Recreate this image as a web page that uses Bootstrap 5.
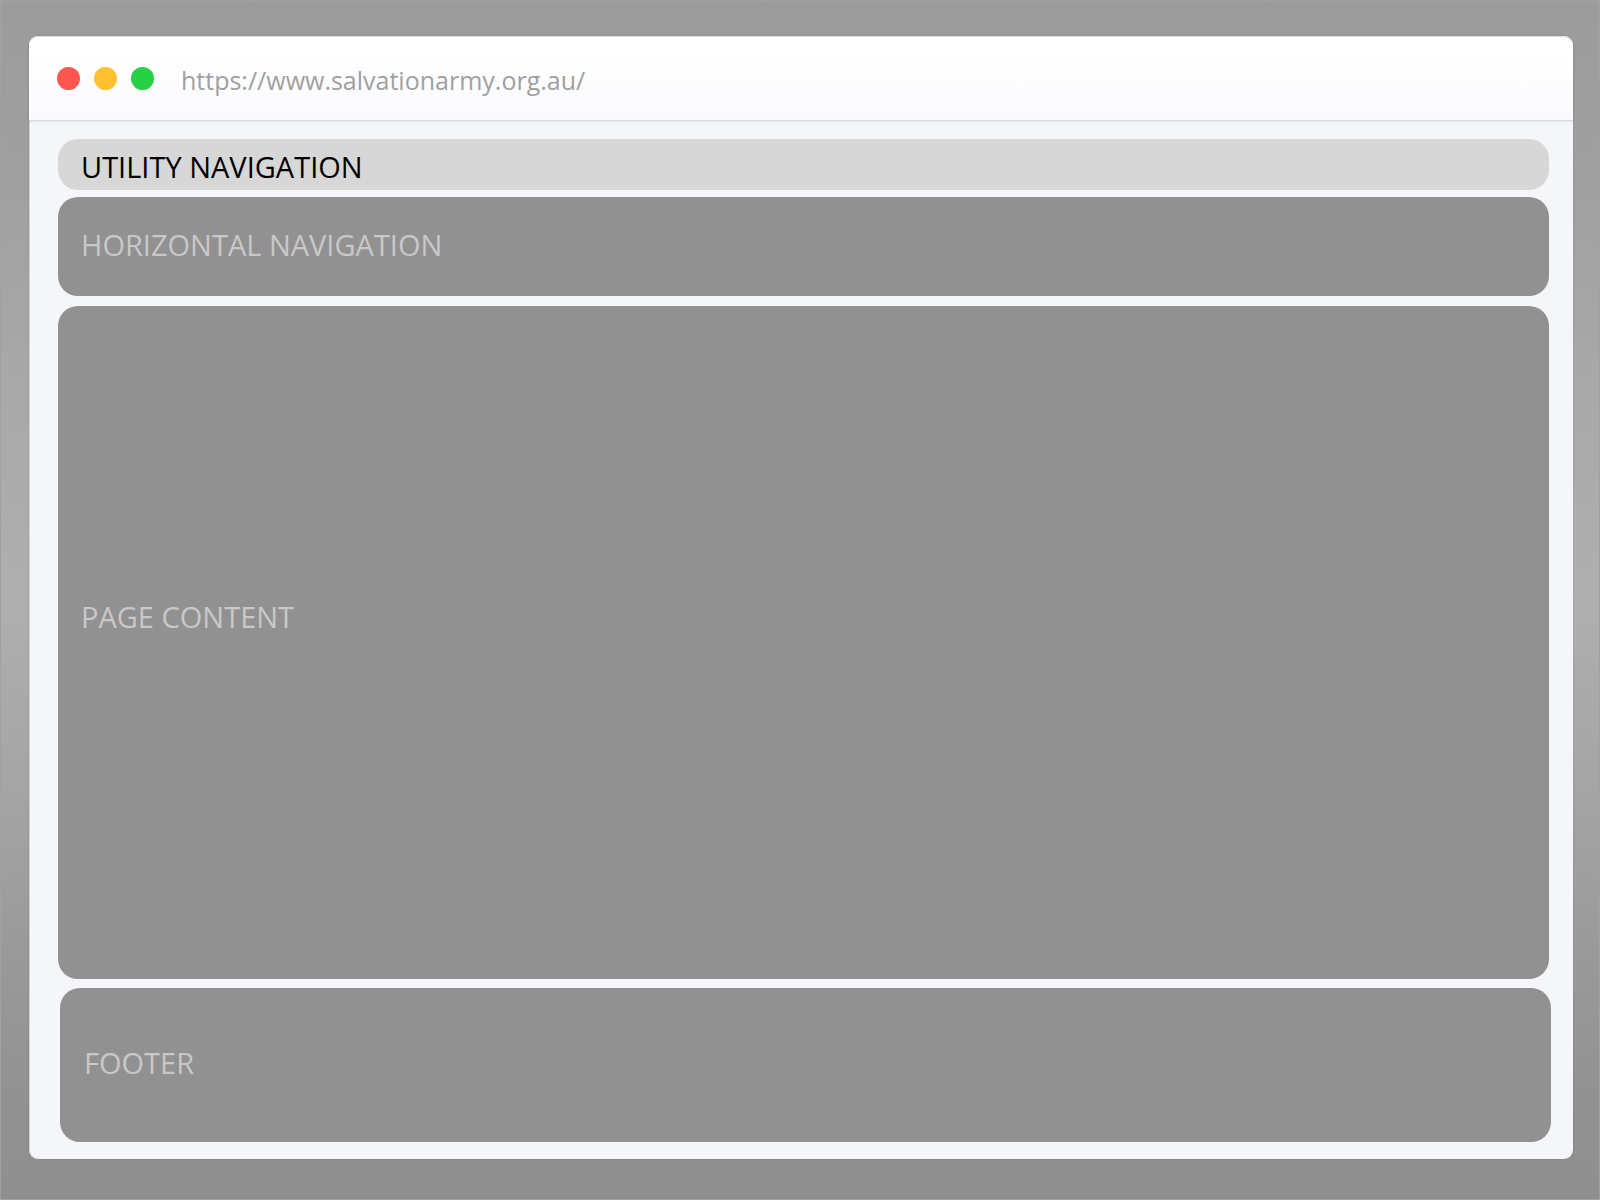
<!DOCTYPE html>
<html lang="en">
<head>
<meta charset="utf-8">
<meta name="viewport" content="width=device-width, initial-scale=1">
<title>Navigation wireframe</title>
<link href="https://cdn.jsdelivr.net/npm/bootstrap@5.3.0/dist/css/bootstrap.min.css" rel="stylesheet">
<style>
  body {
    font-family: "Open Sans", "Noto Sans", sans-serif;
    padding: 36px 27px 41px 29px;
    background: linear-gradient(#9c9c9c 0, #9f9f9f 13%, #a9a9a9 33%, #afafaf 50%, #a6a6a6 64%, #9a9a9a 79%, #929292 90%, #8f8f8f 100%);
    box-shadow: inset 0 0 0 1px #a1a1a1;
  }
  .browser-window {
    background: #f4f6fa;
    border-radius: 9px;
    box-shadow: 0 0 2px rgba(0, 0, 0, .15), inset 1px 0 0 #d2d1d6;
  }
  .title-bar {
    height: 85px;
    padding: 0 28px;
    background: linear-gradient(#fff 20%, #f9fafd);
    border-bottom: 1px solid #d8d9dc;
    border-radius: 9px 9px 0 0;
    box-shadow: inset 0 1px 0 #dcdcdc, 0 1px 3px rgba(0, 0, 0, .08);
  }
  .window-dots { gap: 14px; }
  .dot { width: 23px; height: 23px; border-radius: 50%; }
  .dot-close { background: #ff564f; }
  .dot-min { background: #ffc130; }
  .dot-max { background: #27d045; }
  .address { margin-left: 27px; padding-top: 4px; font-size: 25px; line-height: 32px; color: #a0a0a0; }
  .page-area { padding: 18px 24px 17px 29px; }
  .block {
    padding: 0 23px;
    border-radius: 20px;
    background: #919191;
    color: #c8c8c8;
    font-size: 29px;
    line-height: 36px;
  }
  .block-utility { height: 51px; padding-top: 5px; margin-bottom: 7px; background: #d7d7d7; color: #000; }
  .block-main-nav { height: 99px; padding-bottom: 3px; margin-bottom: 10px; }
  .block-content { padding-bottom: 52px; margin-bottom: 9px; }
  .block-footer { height: 154px; padding: 0 24px 4px; margin: 0 -2px 0 2px; }
</style>
<script src="https://cdn.jsdelivr.net/npm/bootstrap@5.3.0/dist/js/bootstrap.bundle.min.js" defer></script>
</head>
<body class="d-flex min-vh-100">
  <div class="browser-window d-flex flex-column flex-grow-1">
    <header class="title-bar d-flex align-items-center">
      <div class="window-dots d-flex">
        <span class="dot dot-close"></span>
        <span class="dot dot-min"></span>
        <span class="dot dot-max"></span>
      </div>
      <span class="address">https://www.salvationarmy.org.au/</span>
    </header>
    <div class="page-area d-flex flex-column flex-grow-1">
      <nav class="block block-utility d-flex align-items-center" aria-label="Utility">UTILITY NAVIGATION</nav>
      <nav class="block block-main-nav d-flex align-items-center" aria-label="Main">HORIZONTAL NAVIGATION</nav>
      <main class="block block-content d-flex align-items-center flex-grow-1">PAGE CONTENT</main>
      <footer class="block block-footer d-flex align-items-center">FOOTER</footer>
    </div>
  </div>
</body>
</html>
